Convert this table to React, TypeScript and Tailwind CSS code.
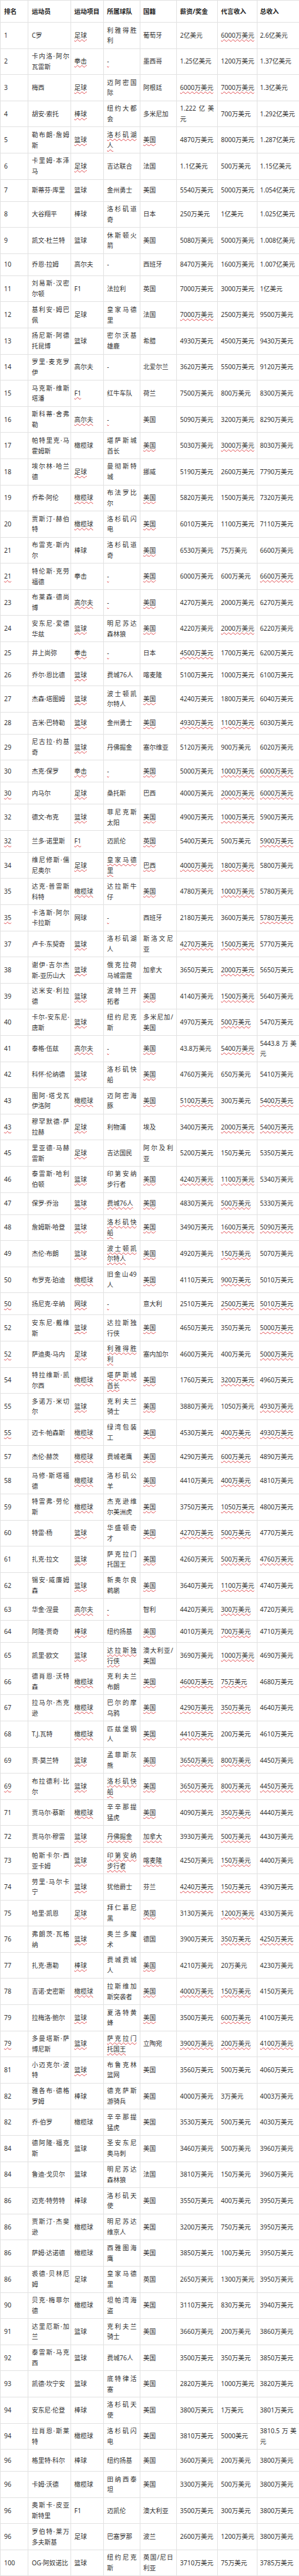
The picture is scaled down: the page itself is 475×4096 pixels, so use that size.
import React from "react";

const rows: string[] = [
  "1|C罗|~足球|利雅得胜利|葡萄牙|2亿美元|~6000万美元|2.6亿美元",
  "2|卡内洛·阿尔瓦雷斯|~拳击|~-|墨西哥|1.25亿美元|1200万美元|1.37亿美元",
  "3|梅西|~足球|迈阿密国际|阿根廷|~6000万美元|~7000万美元|1.3亿美元",
  "4|胡安·索托|~棒球|纽约大都会|多米尼加|1.222亿美元|700万美元|1.292亿美元",
  "5|勒布朗·詹姆斯|~篮球|~洛杉矶湖人|~美国|4870万美元|8000万美元|1.287亿美元",
  "6|卡里姆·本泽马|~足球|吉达联合|法国|1.1亿美元|500万美元|1.15亿美元",
  "7|斯蒂芬·库里|篮球|金州勇士|美国|5540万美元|5000万美元|1.054亿美元",
  "8|大谷翔平|棒球|洛杉矶道奇|日本|250万美元|1亿美元|1.025亿美元",
  "9|凯文·杜兰特|篮球|休斯顿火箭|美国|5080万美元|5000万美元|1.008亿美元",
  "10|乔恩·拉姆|高尔夫|-|西班牙|8470万美元|1600万美元|1.007亿美元",
  "11|刘易斯·汉密尔顿|F1|法拉利|英国|7000万美元|3000万美元|1亿美元",
  "12|基利安·姆巴佩|足球|皇家马德里|法国|~7000万美元|2500万美元|9500万美元",
  "13|扬尼斯·阿德托昆博|篮球|密尔沃基雄鹿|希腊|4930万美元|4500万美元|9430万美元",
  "14|罗里·麦克罗伊|高尔夫|-|北爱尔兰|3620万美元|5500万美元|9120万美元",
  "15|马克斯·维斯塔潘|~F1|红牛车队|荷兰|7500万美元|800万美元|8300万美元",
  "16|斯科蒂·舍弗勒|~高尔夫|~-|美国|5090万美元|3200万美元|8290万美元",
  "17|帕特里克·马霍姆斯|橄榄球|堪萨斯城酋长|~美国|5030万美元|~3000万美元|8030万美元",
  "18|埃尔林·哈兰德|~足球|曼彻斯特城|挪威|5190万美元|2600万美元|7790万美元",
  "19|乔希·阿伦|~橄榄球|布法罗比尔|~美国|5820万美元|1500万美元|7320万美元",
  "20|贾斯汀·赫伯特|~橄榄球|洛杉矶闪电|~美国|6010万美元|1100万美元|7110万美元",
  "21|布雷克·斯内尔|棒球|洛杉矶道奇|~美国|6530万美元|75万美元|6600万美元",
  "~21|特伦斯·克劳福德|拳击|~-|~美国|6000万美元|600万美元|~6600万美元",
  "23|布莱森·德尚博|~高尔夫|~-|~美国|4270万美元|2000万美元|6270万美元",
  "24|安东尼·爱德华兹|~篮球|明尼苏达森林狼|~美国|4220万美元|~2000万美元|6220万美元",
  "25|井上尚弥|~拳击|~-|日本|~4500万美元|1700万美元|6200万美元",
  "26|乔尔·恩比德|~篮球|费城76人|喀麦隆|5100万美元|1000万美元|6100万美元",
  "27|杰森·塔图姆|~篮球|波士顿凯尔特人|~美国|4240万美元|1800万美元|6040万美元",
  "28|吉米·巴特勒|~篮球|金州勇士|~美国|~4930万美元|~1100万美元|6030万美元",
  "29|尼古拉·约基奇|~篮球|丹佛掘金|塞尔维亚|5120万美元|900万美元|6020万美元",
  "30|杰克·保罗|~拳击|~-|~美国|5000万美元|~1000万美元|~6000万美元",
  "~30|内马尔|~足球|桑托斯|巴西|4000万美元|~2000万美元|~6000万美元",
  "32|德文·布克|~篮球|菲尼克斯太阳|~美国|4900万美元|~1000万美元|5900万美元",
  "~32|兰多·诺里斯|~F1|迈凯伦|~英国|5400万美元|500万美元|~5900万美元",
  "34|维尼修斯·儒尼奥尔|~足球|~皇家马德里|~巴西|~4000万美元|~1800万美元|5800万美元",
  "35|达克·普雷斯科特|~橄榄球|达拉斯牛仔|~美国|4780万美元|~1000万美元|5780万美元",
  "~35|卡洛斯·阿尔卡拉斯|网球|~-|西班牙|2180万美元|3600万美元|~5780万美元",
  "37|卢卡·东契奇|~篮球|洛杉矶湖人|斯洛文尼亚|~4270万美元|~1500万美元|5770万美元",
  "38|谢伊·吉尔杰斯-亚历山大|~篮球|俄克拉荷马城雷霆|加拿大|3650万美元|~2000万美元|5650万美元",
  "39|达米安·利拉德|~篮球|波特兰开拓者|~美国|4140万美元|~1500万美元|5640万美元",
  "40|卡尔-安东尼·唐斯|~篮球|纽约尼克斯|多米尼加/美国|4970万美元|~500万美元|5470万美元",
  "41|泰格·伍兹|~高尔夫|~-|~美国|43.8万美元|~5400万美元|5443.8万美元",
  "42|科怀·伦纳德|~篮球|洛杉矶快船|~美国|4760万美元|650万美元|5410万美元",
  "43|图阿·塔戈瓦伊洛阿|~橄榄球|迈阿密海豚|~美国|~5100万美元|300万美元|~5400万美元",
  "~43|穆罕默德·萨拉赫|~足球|利物浦|埃及|3400万美元|~2000万美元|~5400万美元",
  "45|里亚德·马赫雷斯|~足球|吉达国民|阿尔及利亚|5200万美元|150万美元|5350万美元",
  "46|泰雷斯·哈利伯顿|~篮球|印第安纳步行者|~美国|~4240万美元|~1100万美元|5340万美元",
  "47|保罗·乔治|~篮球|~费城76人|~美国|4830万美元|~500万美元|5330万美元",
  "48|詹姆斯·哈登|~篮球|~洛杉矶快船|~美国|3490万美元|~1600万美元|~5090万美元",
  "49|杰伦·布朗|~篮球|~波士顿凯尔特人|~美国|4920万美元|~150万美元|5070万美元",
  "50|布罗克·珀迪|~橄榄球|旧金山49人|~美国|4110万美元|~900万美元|5010万美元",
  "~50|扬尼克·辛纳|~网球|~-|意大利|2510万美元|~2500万美元|~5010万美元",
  "52|安东尼·戴维斯|~篮球|达拉斯独行侠|~美国|4650万美元|350万美元|~5000万美元",
  "~52|萨迪奥·马内|~足球|~利雅得胜利|塞内加尔|4600万美元|400万美元|~5000万美元",
  "54|特拉维斯·凯尔西|~橄榄球|~堪萨斯城酋长|~美国|1760万美元|~3200万美元|4960万美元",
  "55|多诺万·米切尔|~篮球|克利夫兰骑士|~美国|3880万美元|1050万美元|~4930万美元",
  "~55|迈卡·帕森斯|~橄榄球|绿湾包装工|~美国|4530万美元|~400万美元|~4930万美元",
  "57|杰伦·赫茨|~橄榄球|费城老鹰|~美国|4290万美元|~600万美元|4890万美元",
  "58|马修·斯塔福德|~橄榄球|洛杉矶公羊|~美国|4410万美元|~400万美元|4810万美元",
  "59|特雷弗·劳伦斯|~橄榄球|杰克逊维尔美洲虎|~美国|3750万美元|~1050万美元|4800万美元",
  "60|特雷·杨|~篮球|华盛顿奇才|~美国|~4270万美元|~500万美元|4770万美元",
  "61|扎克·拉文|~篮球|萨克拉门托国王|~美国|4260万美元|~500万美元|~4760万美元",
  "62|锡安·威廉姆森|~篮球|新奥尔良鹈鹕|~美国|3640万美元|~1100万美元|4740万美元",
  "63|华金·涅曼|~高尔夫|~-|智利|4420万美元|~300万美元|4720万美元",
  "64|阿隆·贾奇|~棒球|纽约扬基|~美国|4010万美元|~700万美元|4710万美元",
  "65|凯里·欧文|~篮球|~达拉斯独行侠|澳大利亚/美国|3690万美元|~1000万美元|4690万美元",
  "66|德肖恩·沃特森|~橄榄球|克利夫兰布朗|~美国|~4600万美元|~75万美元|4680万美元",
  "67|拉马尔·杰克逊|~橄榄球|巴尔的摩乌鸦|~美国|~4290万美元|~350万美元|4640万美元",
  "68|T.J.瓦特|~橄榄球|匹兹堡钢人|~美国|~4410万美元|200万美元|4610万美元",
  "69|贾·莫兰特|~篮球|孟菲斯灰熊|~美国|~3650万美元|~800万美元|4450万美元",
  "~69|布拉德利·比尔|~篮球|~洛杉矶快船|~美国|~3650万美元|~800万美元|~4450万美元",
  "71|贾马尔·蔡斯|~橄榄球|辛辛那提猛虎|~美国|4090万美元|~350万美元|4440万美元",
  "72|贾马尔·穆雷|~篮球|~丹佛掘金|~加拿大|3930万美元|~500万美元|4430万美元",
  "73|帕斯卡尔·西亚卡姆|~篮球|~印第安纳步行者|~喀麦隆|4250万美元|~150万美元|4400万美元",
  "74|劳里·马尔卡宁|~篮球|犹他爵士|芬兰|~4240万美元|~150万美元|4390万美元",
  "75|哈里·凯恩|~足球|拜仁慕尼黑|~英国|3130万美元|~1200万美元|4330万美元",
  "76|弗朗茨·瓦格纳|~篮球|奥兰多魔术|德国|3900万美元|~350万美元|~4250万美元",
  "77|扎克·惠勒|~棒球|费城费城人|~美国|4210万美元|20万美元|4230万美元",
  "78|吉诺·史密斯|~橄榄球|拉斯维加斯突袭者|~美国|~4000万美元|~150万美元|4150万美元",
  "79|拉梅洛·鲍尔|~篮球|夏洛特黄蜂|~美国|3500万美元|~600万美元|4100万美元",
  "~79|多曼塔斯·萨博尼斯|~篮球|~萨克拉门托国王|立陶宛|~3900万美元|~200万美元|~4100万美元",
  "81|小迈克尔·波特|~篮球|布鲁克林篮网|美国|3560万美元|500万美元|4060万美元",
  "82|雅各布·德格罗姆|棒球|德克萨斯游骑兵|美国|4000万美元|3万美元|4003万美元",
  "82|乔·伯罗|橄榄球|辛辛那提猛虎|美国|3530万美元|500万美元|4030万美元",
  "84|德阿隆·福克斯|篮球|圣安东尼奥马刺|美国|3460万美元|500万美元|3960万美元",
  "84|鲁迪·戈贝尔|篮球|明尼苏达森林狼|法国|3810万美元|150万美元|3960万美元",
  "86|迈克·特劳特|棒球|洛杉矶天使|美国|3550万美元|400万美元|3950万美元",
  "86|贾斯汀·杰斐逊|橄榄球|明尼苏达维京人|美国|3200万美元|750万美元|3950万美元",
  "86|萨姆·达诺德|橄榄球|西雅图海鹰|美国|3850万美元|100万美元|3950万美元",
  "86|裘德·贝林厄姆|足球|皇家马德里|英国|2650万美元|1300万美元|3950万美元",
  "90|贝克·梅菲尔德|橄榄球|坦帕湾海盗|美国|3110万美元|830万美元|3940万美元",
  "91|达里厄斯·加兰|篮球|克利夫兰骑士|美国|3660万美元|200万美元|3860万美元",
  "92|泰雷斯·马克西|篮球|费城76人|美国|3500万美元|350万美元|3850万美元",
  "93|凯德·坎宁安|篮球|底特律活塞|美国|2820万美元|1000万美元|3820万美元",
  "94|安东尼·伦登|棒球|洛杉矶天使|美国|3800万美元|1万美元|3801万美元",
  "94|拉肖恩·斯莱特|橄榄球|洛杉矶闪电|美国|3810万美元|5000美元|3810.5万美元",
  "96|格里特·科尔|棒球|纽约扬基|美国|3600万美元|200万美元|3800万美元",
  "96|卡姆·沃德|橄榄球|田纳西泰坦|美国|3300万美元|500万美元|3800万美元",
  "96|奥斯卡·皮亚斯特里|F1|迈凯伦|澳大利亚|3500万美元|300万美元|3800万美元",
  "96|罗伯特·莱万多夫斯基|足球|巴塞罗那|波兰|2600万美元|1200万美元|3800万美元",
  "100|OG·阿奴诺比|篮球|纽约尼克斯|英国/尼日利亚|3710万美元|75万美元|3785万美元",
];

const headers = ["排名", "运动员", "运动项目", "所属球队", "国籍", "薪资/奖金", "代言收入", "总收入"];

const widths = ["w-[44px]", "w-[68px]", "w-[52px]", "w-[58px]", "w-[58px]", "w-[65px]", "w-[63px]", "w-[67px]"];

const pads = [
  "pl-[5.5px] pr-[2px]",
  "pl-[5.5px] pr-[2px]",
  "pl-[5px] pr-[2px]",
  "pl-[5px] pr-[5px]",
  "pl-[4.5px] pr-[5px]",
  "pl-[5px] pr-[5px]",
  "pl-[5px] pr-[2px]",
  "pl-[4px] pr-[4px]",
];

const wavy =
  "underline decoration-wavy decoration-[#e0474c] decoration-1 underline-offset-[2px]";

function Cell({ v, i }: { v: string; i: number }) {
  const u = v.startsWith("~");
  const t = u ? v.slice(1) : v;
  return (
    <td
      className={`border border-[#e2e2e2] h-[35px] py-[3.5px] align-middle text-justify leading-[16.8px] ${pads[i]}`}
    >
      {u ? <span className={wavy}>{t}</span> : t}
    </td>
  );
}

export default function App() {
  return (
    <div className="w-[475px] bg-white text-[#333333] text-[10px] font-['Noto_Sans','Noto_Sans_CJK_SC',sans-serif]">
      <table className="table-fixed border-collapse w-[475px]">
        <colgroup>
          {widths.map((w, i) => (
            <col key={i} className={w} />
          ))}
        </colgroup>
        <thead>
          <tr>
            {headers.map((h, i) => (
              <th
                key={i}
                className={`border border-[#e2e2e2] h-[35px] py-[3.5px] align-middle text-left font-bold text-[#222222] leading-[16.8px] ${pads[i]}`}
              >
                {h}
              </th>
            ))}
          </tr>
        </thead>
        <tbody>
          {rows.map((r, ri) => (
            <tr key={ri}>
              {r.split("|").map((v, i) => (
                <Cell key={i} v={v} i={i} />
              ))}
            </tr>
          ))}
        </tbody>
      </table>
    </div>
  );
}
